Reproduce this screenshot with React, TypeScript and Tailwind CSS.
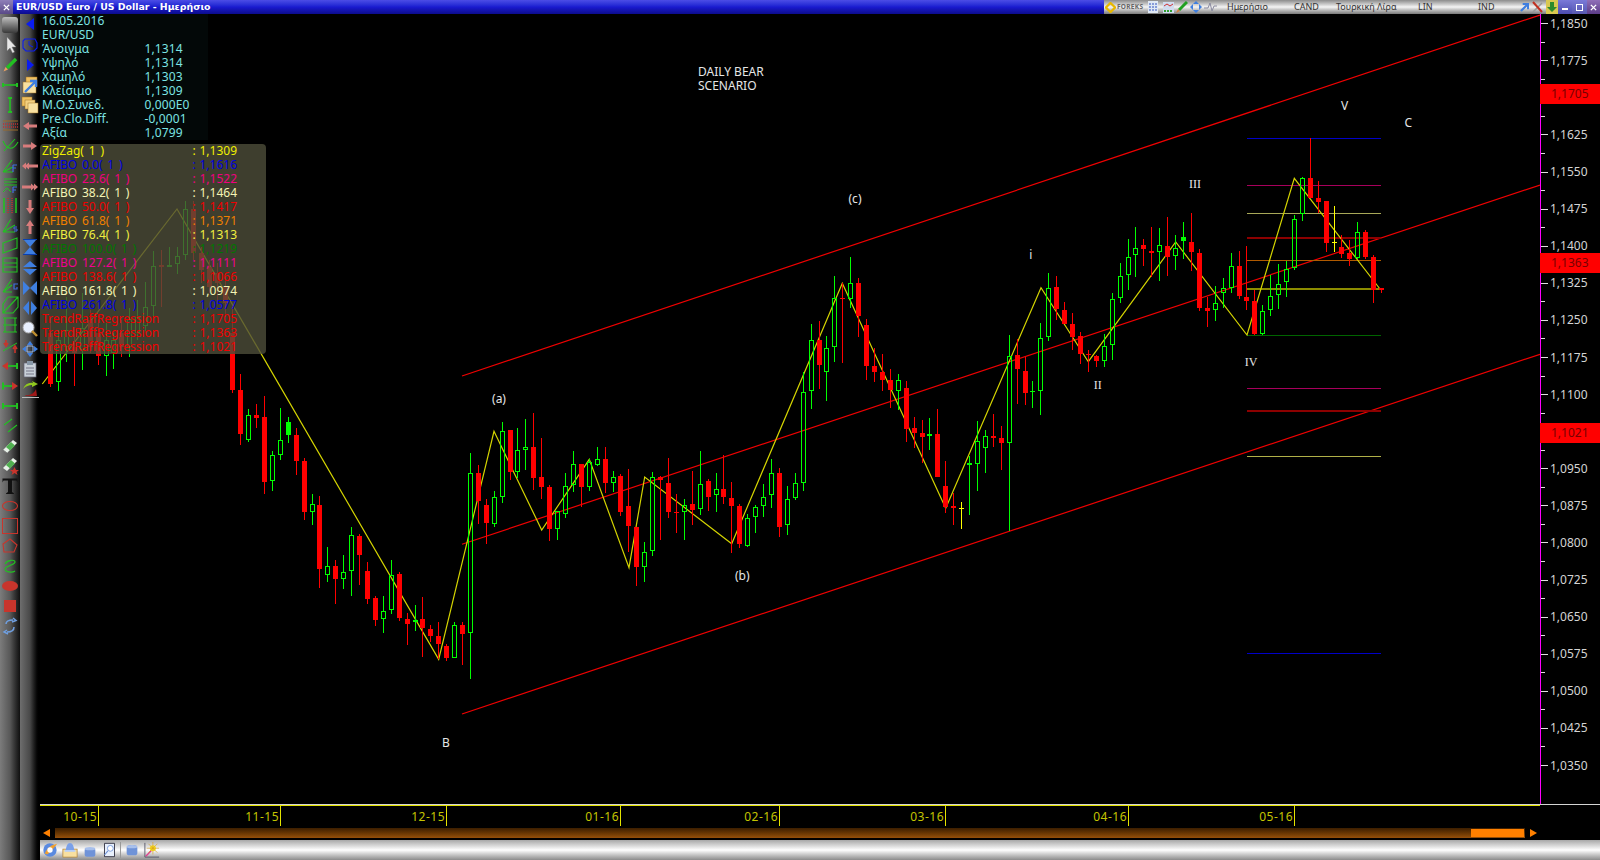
import React from "react";

type Row = [number, number, number, number, number, string];
const mk = (ox: number, oy: number, rows: Row[]) =>
  rows.map(([zx, hi, lo, top, bot, t]) => ({
    x: Math.floor(ox + zx / 3),
    hi: Math.round(oy + hi / 3),
    lo: Math.round(oy + lo / 3),
    top: Math.round(oy + top / 3),
    bot: Math.round(oy + bot / 3),
    t,
  }));

const candles = [
  ...mk(0, 0, [
    [151, 950, 1160, 1000, 1152, "r"], [175, 990, 1172, 1020, 1145, "g"], [199, 890, 1085, 990, 1040, "g"],
    [223, 980, 1157, 1040, 1060, "r"], [247, 880, 1110, 985, 1050, "g"], [271, 930, 1060, 960, 1040, "r"],
    [295, 960, 1095, 1000, 1067, "r"], [319, 970, 1127, 1020, 1067, "g"], [340, 1000, 1107, 1020, 1060, "g"],
    [365, 960, 1072, 1000, 1040, "r"], [389, 925, 1072, 958, 1040, "g"], [412, 900, 1020, 950, 1000, "g"],
    [436, 845, 1000, 920, 977, "g"], [460, 752, 950, 798, 917, "g"], [484, 750, 920, 794, 800, "r"],
    [508, 740, 800, 794, 798, "g"], [532, 740, 822, 768, 793, "g"], [556, 603, 780, 628, 766, "g"],
    [580, 603, 780, 628, 760, "r"], [604, 740, 850, 760, 810, "r"], [628, 780, 880, 800, 860, "r"],
    [652, 790, 900, 820, 850, "r"], [676, 830, 950, 860, 910, "r"], [697, 920, 1180, 1000, 1170, "r"],
  ]),
  ...mk(30, 340, [
    [631, 102, 315, 150, 281, "r"], [655, 207, 305, 226, 299, "g"], [679, 192, 263, 226, 233, "r"],
    [703, 168, 461, 232, 425, "r"], [727, 334, 452, 346, 422, "g"], [751, 205, 360, 301, 344, "g"],
    [775, 232, 308, 247, 284, "G"], [799, 265, 404, 286, 362, "r"], [823, 355, 539, 364, 515, "r"],
    [847, 462, 555, 493, 515, "g"], [868, 468, 743, 496, 687, "r"], [892, 622, 725, 679, 706, "g"],
    [916, 660, 791, 679, 716, "r"], [940, 646, 746, 697, 718, "g"], [964, 562, 767, 586, 692, "g"],
    [988, 583, 734, 589, 644, "r"], [1012, 667, 791, 694, 777, "r"], [1036, 769, 857, 775, 839, "r"],
    [1060, 769, 878, 814, 838, "g"], [1084, 661, 821, 706, 811, "g"], [1108, 697, 842, 703, 833, "r"],
    [1132, 820, 915, 838, 851, "r"], [1156, 796, 872, 841, 847, "g"], [1177, 771, 950, 838, 863, "r"],
    [1201, 856, 905, 868, 887, "r"], [1225, 847, 958, 889, 911, "r"], [1249, 913, 964, 919, 953, "r"],
    [1273, 847, 955, 856, 953, "g"], [1297, 847, 974, 856, 881, "r"],
  ]),
  ...mk(450, 390, [
    [61, 190, 866, 250, 729, "g"], [85, 226, 401, 250, 333, "r"], [109, 327, 461, 346, 399, "r"],
    [133, 304, 410, 322, 401, "g"], [157, 97, 338, 124, 320, "g"], [181, 120, 270, 120, 245, "r"],
    [203, 114, 265, 181, 245, "g"], [226, 87, 240, 172, 181, "g"], [250, 69, 300, 171, 264, "r"],
    [274, 145, 326, 262, 291, "r"], [298, 286, 452, 292, 416, "r"], [322, 362, 449, 362, 416, "g"],
    [346, 250, 383, 289, 371, "g"], [370, 184, 305, 223, 284, "g"], [394, 222, 350, 223, 291, "r"],
    [418, 208, 302, 217, 290, "g"], [442, 171, 228, 208, 224, "g"], [466, 172, 308, 208, 279, "r"],
    [490, 243, 305, 262, 278, "g"], [512, 252, 378, 258, 365, "r"], [536, 237, 486, 349, 407, "r"],
    [560, 411, 587, 411, 531, "r"], [584, 457, 575, 487, 532, "g"], [608, 245, 497, 260, 484, "g"],
    [632, 259, 449, 262, 270, "r"], [656, 205, 383, 280, 365, "r"], [680, 312, 429, 367, 370, "r"],
    [703, 328, 449, 344, 367, "g"], [727, 243, 405, 342, 359, "r"], [751, 184, 374, 283, 358, "g"],
    [775, 268, 364, 274, 321, "r"], [799, 250, 365, 298, 316, "g"], [820, 195, 342, 297, 320, "r"],
    [844, 277, 488, 324, 347, "r"], [868, 342, 473, 348, 461, "r"], [892, 373, 470, 385, 467, "g"],
    [916, 346, 429, 352, 382, "g"], [940, 283, 381, 322, 349, "g"], [964, 207, 354, 250, 316, "g"],
    [988, 234, 440, 250, 410, "r"], [1012, 288, 435, 328, 406, "g"], [1036, 250, 330, 280, 323, "g"],
  ]),
  ...mk(780, 230, [
    [70, 425, 782, 487, 758, "g"], [94, 282, 536, 331, 482, "g"], [118, 274, 477, 330, 405, "r"],
    [139, 319, 513, 355, 425, "g"], [163, 139, 396, 205, 352, "g"], [187, 160, 399, 203, 207, "r"],
    [211, 82, 234, 160, 206, "g"], [235, 145, 321, 160, 257, "r"], [259, 267, 449, 286, 407, "r"],
    [283, 355, 456, 408, 426, "r"], [307, 373, 483, 426, 450, "r"], [331, 418, 533, 450, 480, "r"],
    [355, 433, 540, 449, 482, "g"], [379, 454, 636, 475, 597, "r"], [403, 561, 655, 595, 609, "r"],
    [427, 571, 700, 610, 621, "r"], [448, 564, 660, 613, 617, "G"], [472, 538, 742, 613, 741, "r"],
    [496, 694, 848, 769, 830, "r"], [520, 790, 885, 829, 833, "r"], [544, 817, 896, 833, 836, "y"],
    [568, 677, 855, 700, 704, "G"], [592, 574, 783, 634, 701, "g"], [616, 601, 729, 619, 653, "g"],
    [640, 553, 652, 619, 623, "r"], [664, 588, 720, 625, 640, "r"], [688, 316, 902, 377, 640, "g"],
    [712, 328, 522, 376, 417, "r"], [736, 381, 525, 423, 489, "r"], [757, 454, 534, 483, 485, "G"],
    [781, 280, 555, 325, 482, "g"], [805, 130, 333, 173, 320, "g"], [829, 138, 270, 172, 237, "r"],
    [853, 217, 282, 240, 282, "r"], [877, 250, 360, 283, 321, "r"], [901, 306, 402, 319, 372, "r"],
    [925, 361, 425, 372, 375, "r"], [949, 375, 411, 377, 392, "r"], [973, 312, 411, 349, 394, "g"],
    [997, 190, 390, 208, 346, "g"], [1021, 100, 219, 139, 205, "g"], [1045, 27, 180, 80, 136, "g"],
    [1066, -10, 140, 55, 74, "g"], [1090, 27, 108, 45, 57, "r"], [1114, -8, 140, 64, 68, "r"],
    [1138, -5, 153, 46, 67, "g"], [1162, -38, 137, 48, 80, "r"], [1186, 15, 120, 55, 79, "g"],
    [1210, -24, 88, 22, 33, "G"], [1234, -50, 124, 36, 65, "r"], [1258, 57, 243, 69, 234, "r"],
    [1282, 200, 290, 235, 243, "r"],
  ]),
  ...mk(1180, 120, [
    [82, 530, 620, 565, 572, "r"], [106, 498, 602, 548, 571, "g"], [130, 475, 563, 505, 520, "g"],
    [154, 399, 518, 439, 505, "g"], [178, 393, 537, 438, 527, "r"], [199, 378, 570, 531, 542, "r"],
    [223, 510, 645, 543, 641, "r"], [247, 555, 645, 574, 643, "g"], [271, 465, 587, 529, 571, "g"],
    [295, 432, 567, 493, 526, "g"], [319, 424, 530, 448, 487, "g"], [343, 285, 449, 298, 445, "g"],
    [367, 171, 303, 175, 283, "g"], [391, 55, 233, 175, 233, "r"], [415, 183, 278, 235, 245, "r"],
    [439, 243, 395, 244, 369, "r"], [463, 259, 395, 367, 370, "y"], [484, 345, 414, 382, 401, "r"],
    [508, 360, 437, 400, 417, "r"], [532, 306, 417, 337, 415, "g"], [556, 330, 417, 336, 411, "r"],
    [580, 406, 548, 412, 509, "r"], [604, 505, 519, 505, 509, "r"],
  ]),
];

const zigzag =
  "42.3,384 177,209 438.7,659.3 494,431.3 541.7,530 589.3,459.3 629,567.7 644.7,477 731.7,543.7 842.3,283.3 945.7,508.3 1041,287.7 1088.3,361.7 1175.7,242 1247,335 1294.3,178.3 1380,289";

const fibs: [number, string, number][] = [
  [138, "#0000c8", 1], [185, "#a8005c", 1], [213, "#a8a858", 1], [237, "#8c0000", 2], [260, "#b05a00", 1],
  [288, "#8c8c00", 2], [335, "#006400", 1], [388, "#a8005c", 1], [410, "#8c0000", 2], [456, "#b0b048", 1], [653, "#0000c8", 1],
];

const labels: [string, number, number, string, number][] = [
  ["DAILY BEAR", 698, 75.5, "start", 0],
  ["SCENARIO", 698, 89.5, "start", 0],
  ["(a)", 499, 403, "middle", 0],
  ["(b)", 742.3, 579.5, "middle", 0],
  ["(c)", 855, 203, "middle", 0],
  ["B", 446, 747, "middle", 0],
  ["i", 1030.7, 259, "middle", 0],
  ["II", 1097.7, 389, "middle", 1],
  ["III", 1195, 188, "middle", 1],
  ["IV", 1251, 366, "middle", 1],
  ["V", 1344.7, 110, "middle", 0],
  ["C", 1408.3, 127, "middle", 0],
];

const Chart = () => (
  <svg viewBox="40 14 1500 790" className="absolute inset-0 w-[1500px] h-[790px]">
    <g stroke="#f00000" strokeWidth="1.2" fill="none">
      <line x1="462" y1="376" x2="1540" y2="15" />
      <line x1="462" y1="544.3" x2="1540" y2="185" />
      <line x1="462" y1="714" x2="1540" y2="354.3" />
    </g>
    <g shapeRendering="crispEdges">
      {fibs.map(([y, c, h], i) => (
        <rect key={i} x="1247" y={y} width="134" height={h} fill={c} />
      ))}
    </g>
    <polyline points={zigzag} fill="none" stroke="#d4d400" strokeWidth="1.2" />
    <g shapeRendering="crispEdges">
      {candles.map((c, i) => {
        const col = c.t === "r" ? "#ff0000" : c.t === "y" ? "#ffff00" : "#00ff00";
        const h = Math.max(c.bot - c.top, 1);
        return (
          <g key={i}>
            <rect x={c.x} y={c.hi} width="1" height={Math.max(c.top - c.hi, 0)} fill={col} />
            <rect x={c.x} y={c.top + h} width="1" height={Math.max(c.lo - c.top - h, 0)} fill={col} />
            {c.t === "g" ? (
              <rect x={c.x - 1.5} y={c.top + 0.5} width="4" height={Math.max(h - 1, 1)} fill="none" stroke={col} strokeWidth="1" />
            ) : (
              <rect x={c.x - 2} y={c.top} width="5" height={h} fill={col} />
            )}
          </g>
        );
      })}
    </g>
    {labels.map(([t, x, y, a, serif], i) => (
      <text
        key={i}
        x={x}
        y={y}
        textAnchor={a as "start" | "middle"}
        fill="#e6e6e6"
        fontSize="12"
        fontFamily={serif ? "'Liberation Serif', serif" : "'Noto Sans', sans-serif"}
      >
        {t}
      </text>
    ))}
  </svg>
);

const S = ({ children }: { children: React.ReactNode }) => (
  <svg viewBox="0 0 18 18" className="w-[18px] h-[18px]">
    {children}
  </svg>
);
const G = "#22c022";
const R = "#c8352c";
const B = "#3f6fe0";
const P = "#d87c7c";

const strip1: React.ReactNode[] = [
  <div className="w-[16px] h-[16px] rounded-[3px] bg-linear-to-b from-[#c0c0c0] to-[#3a3a3a]" />,
  <S><path d="M6 1V15L9 12L11.5 17L13.5 16L11 11H15Z" fill="#e8e8e8" stroke="#777" strokeWidth=".5" /></S>,
  <S><path d="M15 3L6 12" stroke={G} strokeWidth="3.4" /><path d="M4.5 11L7 13.5L2.5 15.5Z" fill="#e8a060" /></S>,
  <S><path d="M2 9H16" stroke={G} strokeWidth="1.6" /><path d="M2 7V11M16 7V11" stroke={G} strokeWidth="2" /></S>,
  <S><path d="M9 2V16" stroke={G} strokeWidth="1.6" /><path d="M7 2H11M7 16H11" stroke={G} strokeWidth="2" /></S>,
  <S><path d="M2 5H17M2 14H17" stroke="#9a6a2a" strokeWidth="1" /><path d="M2 8H17M2 11H17" stroke="#c03030" strokeWidth="1.4" strokeDasharray="1 1" /></S>,
  <S><path d="M2 5C6 14 12 15 17 6M3 15L14 3" stroke={G} strokeWidth="1.1" fill="none" /></S>,
  <S><path d="M2 16L11 4M2 16L12 11M2 16H12" stroke={G} strokeWidth="1.1" fill="none" /><path d="M12 9V16M12 9H16M12 12H15" stroke={B} strokeWidth="1.2" /></S>,
  <S><path d="M3 3H16M3 6H16M3 9H16M2 16L6 12L10 16" stroke={G} strokeWidth="1" fill="none" /><path d="M12 11V17M12 11H16M12 14H15" stroke={B} strokeWidth="1.2" /></S>,
  <S><path d="M3 2V17M15 2V17" stroke={G} strokeWidth="1.6" /><path d="M7 2V17M11 2V17" stroke="#c03030" strokeWidth="1.5" strokeDasharray="1 1" /></S>,
  <S><path d="M2 16L10 3M2 16L14 9M2 16H14" stroke={G} strokeWidth="1.1" fill="none" /><path d="M16 11H13V13H16V15H13" stroke={B} strokeWidth="1" fill="none" /></S>,
  <S><path d="M2 7L16 2V12L2 17ZM2 7V17M16 2V12" stroke={G} strokeWidth="1.1" fill="none" /></S>,
  <S><path d="M2 2H16V16H2ZM2 7H16M2 11H16" stroke={G} strokeWidth="1.1" fill="none" /></S>,
  <S><path d="M2 16L11 3M2 16L11 9M2 16H11" stroke={G} strokeWidth="1.1" fill="none" /><path d="M17 8H13V13H16V11" stroke={B} strokeWidth="1.2" fill="none" /></S>,
  <S><path d="M2 8L7 1H17V11L12 17H2ZM2 17L17 1" stroke={G} strokeWidth="1.1" fill="none" /></S>,
  <S><path d="M2 2H16M2 9H16M2 16H16M4 2V16M14 2V16" stroke={G} strokeWidth="1.1" fill="none" /></S>,
  <S><path d="M2 14L16 6" stroke={G} strokeWidth="1" /><path d="M5 3V7M3 6L5 9L7 6" stroke={R} strokeWidth="1.6" fill="none" /><path d="M14 16V11M12 12L14 9L16 12" stroke={R} strokeWidth="1.6" fill="none" /></S>,
  <S><path d="M6 9H17" stroke={G} strokeWidth="1.8" /><path d="M16 6V12" stroke={G} strokeWidth="2" /><path d="M1 9L7 5V13Z" fill={R} /></S>,
  <S><path d="M2 9H12" stroke={G} strokeWidth="1.8" /><path d="M2 5.5V12.5" stroke={G} strokeWidth="2" /><path d="M17 9L11 5V13Z" fill={R} /></S>,
  <S><path d="M2 9H16" stroke={G} strokeWidth="1.8" /><path d="M2 6V12M16 6V12" stroke={G} strokeWidth="2" /></S>,
  <S><path d="M3 8L11 2M7 15L16 8" stroke={G} strokeWidth="1.1" /></S>,
  <S><path d="M2 13L12 3L16 6L6 16Z" fill="#e8f0e8" /><path d="M5 10L10 5L14 8.5L9 13.5Z" fill="#50b050" /><path d="M2 13L6 16" stroke="#777" /></S>,
  <S><path d="M2 11L12 1L16 4L6 14Z" fill="#e8f0e8" /><path d="M5 8L10 3L14 6.5L9 11.5Z" fill="#50b050" /><path d="M13.5 10L15 13H18L15.5 15L16.5 18L13.5 16L10.5 18L11.5 15L9 13H12Z" fill={R} /></S>,
  <S><path d="M1.5 1.5H16.5V5.5L15.5 3.5H11V15L13 16.5V17H5V16.5L7 15V3.5H2.5L1.5 5.5Z" fill="#111" /></S>,
  <S><ellipse cx="9" cy="9" rx="7.5" ry="4.5" fill="none" stroke={R} strokeWidth="1.1" /></S>,
  <S><rect x="1.5" y="1.5" width="15" height="15" fill="none" stroke={R} strokeWidth="1" /></S>,
  <S><path d="M9 2L16 8L13 15H3L2 7Z" fill="none" stroke={R} strokeWidth="1.1" /></S>,
  <S><path d="M4 7C6 3 14 2 14 5C14 8 4 9 4 12C4 15 11 16 14 14" fill="none" stroke={G} strokeWidth="1.2" /></S>,
  <S><ellipse cx="9" cy="9" rx="8" ry="5" fill={R} /></S>,
  <S><rect x="3" y="3" width="12" height="12" fill={R} /></S>,
  <S><path d="M5 7C5 4 9 3 12 3M12 1L15 3.5L11 5M13 10C13 14 9 15 6 15M6 13L3 15L7 17" fill="none" stroke="#6f9fe0" strokeWidth="1.5" /></S>,
];

const strip2: React.ReactNode[] = [
  <S><path d="M13 3L5 9L13 15Z" fill="#0a1cf0" /></S>,
  <S><path d="M4 4H14L16 8V13L13 16H5L2 13V6Z" fill="none" stroke="#0a1cf0" strokeWidth="1.1" /><path d="M8 6V10L12 12" fill="none" stroke="#0a1cf0" /></S>,
  <S><path d="M6 3L13 9L6 15Z" fill="#0a1cf0" /></S>,
  <S><rect x="5" y="1" width="11" height="9" fill="#f0c060" stroke="#a07020" strokeWidth=".5" /><rect x="2" y="6" width="13" height="11" fill="#f8e0a0" stroke="#a07020" strokeWidth=".5" /><path d="M4 16L14 6M9 5H15V11" stroke="#3f7fe0" strokeWidth="2.4" fill="none" /></S>,
  <S><rect x="1" y="1" width="10" height="9" fill="#f0c060" stroke="#a07020" strokeWidth=".5" /><rect x="4" y="4" width="10" height="9" fill="#f4d080" stroke="#a07020" strokeWidth=".5" /><rect x="7" y="7" width="10" height="10" fill="#f8e0a0" stroke="#a07020" strokeWidth=".5" /></S>,
  <S><path d="M2 9L8 5V7.5H16V10.5H8V13Z" fill={P} /></S>,
  <S><path d="M16 9L10 5V7.5H2V10.5H10V13Z" fill={P} /></S>,
  <S><path d="M1 9L5 5.5V8L8 5.5V7.5H17V10.5H8V12.5L5 10V12.5Z" fill={P} /></S>,
  <S><path d="M17 9L13 5.5V8L10 5.5V7.5H1V10.5H10V12.5L13 10V12.5Z" fill={P} /></S>,
  <S><path d="M9 16L5 10H7.5V2H10.5V10H13Z" fill={P} /></S>,
  <S><path d="M9 2L5 8H7.5V16H10.5V8H13Z" fill={P} /></S>,
  <S><path d="M3 2H15L9 9ZM9 9L15 16H3Z" fill="#3f7fe0" /><path d="M2 1.5H16M2 16.5H16" stroke="#0a3fb0" /></S>,
  <S><path d="M9 2L16 8H2ZM2 10H16L9 16Z" fill="#3f7fe0" /></S>,
  <S><path d="M2 2V16L9 9ZM16 2V16L9 9Z" fill="#3f7fe0" /></S>,
  <S><path d="M8 2V16L2 9ZM10 2V16L16 9Z" fill="#3f7fe0" /></S>,
  <S><circle cx="7.5" cy="7.5" r="5.5" fill="#e8f0ff" stroke="#aaa" /><path d="M11 11L16 16" stroke="#c09030" strokeWidth="2.4" /></S>,
  <S><path d="M9 1L12 5H6ZM9 17L12 13H6ZM1 9L5 6V12ZM17 9L13 6V12Z" fill="#3f7fe0" /><path d="M6 6L12 6L12 12L6 12Z" fill="none" stroke="#9fbff0" /></S>,
  <S><rect x="3" y="3" width="12" height="14" fill="#c8d0d8" stroke="#667" strokeWidth=".7" /><rect x="6" y="1" width="6" height="4" fill="#8898a8" /><path d="M5 8H13M5 11H13M5 14H13" stroke="#778" /></S>,
  <S><path d="M2 9C4 4 8 2 12 3L11 1L17 4L11 7V5C8 5 5 6 2 9Z" fill="#90c820" /><path d="M4 15C8 16 13 14 15 9L16 16H5Z" fill="#a01818" /><path d="M1 17.5H18" stroke="#bbb" /></S>,
];

const B2 = ({ children, cls }: { children: React.ReactNode; cls: string }) => (
  <svg viewBox="0 0 18 18" className={cls}>{children}</svg>
);

const info: [string, string][] = [
  ["16.05.2016", ""],
  ["EUR/USD", ""],
  ["Άνοιγμα", "1,1314"],
  ["Υψηλό", "1,1314"],
  ["Χαμηλό", "1,1303"],
  ["Κλείσιμο", "1,1309"],
  ["Μ.Ο.Συνεδ.", "0,000E0"],
  ["Pre.Clo.Diff.", "-0,0001"],
  ["Αξία", "1,0799"],
];

const panel = [
  { n: "ZigZag( 1 )", v: "1,1309", c: "text-[#f0f000]" },
  { n: "AFIBO 0.0( 1 )", v: "1,1616", c: "text-[#0000e0]" },
  { n: "AFIBO 23.6( 1 )", v: "1,1522", c: "text-[#f00080]" },
  { n: "AFIBO 38.2( 1 )", v: "1,1464", c: "text-[#f4f4b4]" },
  { n: "AFIBO 50.0( 1 )", v: "1,1417", c: "text-[#f00000]" },
  { n: "AFIBO 61.8( 1 )", v: "1,1371", c: "text-[#f08000]" },
  { n: "AFIBO 76.4( 1 )", v: "1,1313", c: "text-[#f0f040]" },
  { n: "AFIBO 100.0( 1 )", v: "1,1219", c: "text-[#007800]" },
  { n: "AFIBO 127.2( 1 )", v: "1,1111", c: "text-[#f00090]" },
  { n: "AFIBO 138.6( 1 )", v: "1,1066", c: "text-[#f00000]" },
  { n: "AFIBO 161.8( 1 )", v: "1,0974", c: "text-[#f4f4b4]" },
  { n: "AFIBO 261.8( 1 )", v: "1,0577", c: "text-[#0000e0]" },
  { n: "TrendRaffRegression", v: "1,1705", c: "text-[#f00000]" },
  { n: "TrendRaffRegression", v: "1,1363", c: "text-[#f00000]" },
  { n: "TrendRaffRegression", v: "1,1021", c: "text-[#f00000]" },
];

const ticks = [
  "1,1850", "1,1775", "1,1700", "1,1625", "1,1550", "1,1475", "1,1400", "1,1325", "1,1250", "1,1175", "1,1100",
  "1,1025", "1,0950", "1,0875", "1,0800", "1,0725", "1,0650", "1,0575", "1,0500", "1,0425", "1,0350",
];

const months: [string, string][] = [
  ["10-15", "w-[59px]"], ["11-15", "w-[182px]"], ["12-15", "w-[166px]"], ["01-16", "w-[174px]"],
  ["02-16", "w-[159px]"], ["03-16", "w-[166px]"], ["04-16", "w-[183px]"], ["05-16", "w-[166px]"],
];

const tags: [string, string][] = [
  ["1,1705", "top-[70px]"],
  ["1,1363", "top-[239px]"],
  ["1,1021", "top-[409px]"],
];

export default function App() {
  return (
    <div className="w-[1600px] h-[860px] bg-black overflow-hidden flex flex-col font-['Noto_Sans',sans-serif] text-[12px] leading-[14px]">
      <div className="h-[14px] flex items-stretch shrink-0 bg-linear-to-b from-[#4c4ce6] via-[#1a1ad0] to-[#0c0c8c]">
        <div className="w-[13px] shrink-0 bg-linear-to-b from-[#8f80b8] to-[#5a4a88] flex items-center justify-center">
          <svg viewBox="0 0 8 8" className="w-[7px] h-[7px]"><path d="M1 1L7 7M7 1L1 7" stroke="#fff" strokeWidth="1.6" /></svg>
        </div>
        <div className="ml-[3px] w-[1088px] shrink-0 text-white font-bold text-[9.4px] leading-[14px] font-['DejaVu_Sans',sans-serif] whitespace-nowrap">
          EUR/USD Euro / US Dollar - Ημερήσιο
        </div>
        <div className="w-[442px] shrink-0 flex items-center bg-linear-to-b from-[#8c8c8c] via-[#f4f4f4] to-[#7a7a7a] text-[#333] text-[9px] leading-[14px]">
          <svg viewBox="0 0 12 12" className="ml-[1px] w-[11px] h-[11px]"><path d="M6 1L11 6L6 11L1 6Z" fill="none" stroke="#e8b800" strokeWidth="2.4" /></svg>
          <span className="ml-[1px] w-[30px] text-[6.5px] font-bold text-[#666] tracking-[0.3px]">FOREKS</span>
          <svg viewBox="0 0 10 12" className="ml-[1px] w-[10px] h-[12px]"><rect width="10" height="12" fill="#dfe8f4" /><path d="M1 3H9M1 6H9M1 9H9" stroke="#3050c0" strokeDasharray="2 1" /></svg>
          <svg viewBox="0 0 11 11" className="ml-[5px] w-[11px] h-[11px]"><rect width="11" height="11" fill="#d0dcf0" /><path d="M1 4L4 2L7 4L10 2" stroke="#d03030" fill="none" /><path d="M1 9H10" stroke="#30a030" strokeWidth="2" strokeDasharray="2 1" /></svg>
          <svg viewBox="0 0 12 12" className="ml-[2px] w-[12px] h-[12px]"><path d="M11 1L3 9" stroke="#20a020" strokeWidth="3" /><path d="M2 8L4 10L0 12Z" fill="#d08040" /></svg>
          <svg viewBox="0 0 12 12" className="ml-[2px] w-[12px] h-[12px]"><path d="M6 0L9 3H3ZM6 12L9 9H3ZM0 6L3 3V9ZM12 6L9 3V9Z" fill="#3f7fe0" /></svg>
          <svg viewBox="0 0 13 10" className="ml-[2px] w-[13px] h-[10px]"><path d="M0 6H4L6 1L8 9L10 4H13" stroke="#8a8aa0" fill="none" /></svg>
          <span className="ml-[10px] w-[67px] shrink-0">Ημερήσιο</span>
          <span className="w-[42px] shrink-0">CAND</span>
          <span className="w-[82px] shrink-0">Τουρκική Λίρα</span>
          <span className="w-[60px] shrink-0">LIN</span>
          <span className="w-[42px] shrink-0">IND</span>
          <svg viewBox="0 0 10 10" className="w-[9px] h-[9px] shrink-0"><path d="M1 9L8 2M3 1H9V7" stroke="#3f7fe0" strokeWidth="2.4" fill="none" /></svg>
          <svg viewBox="0 0 11 12" className="ml-[3px] w-[11px] h-[12px] shrink-0"><path d="M1 11L10 2" stroke="#999" strokeWidth="1.6" /><path d="M1 1L10 11" stroke="#c03020" strokeWidth="2" /></svg>
        </div>
        <div className="w-[12px] shrink-0 bg-[#d8c850] flex items-center justify-center">
          <svg viewBox="0 0 10 12" className="w-[10px] h-[12px]"><path d="M3 1H7V6H10L5 11L0 6H3Z" fill="#2c8a2c" /></svg>
        </div>
        <div className="w-[14px] shrink-0 bg-linear-to-b from-[#7a7ad8] to-[#4c4cb0] flex items-center justify-center pt-[4px]">
          <div className="w-[6px] h-[2px] bg-white" />
        </div>
        <div className="w-[15px] shrink-0 bg-linear-to-b from-[#7a7ad8] to-[#5858b0] flex items-center justify-center">
          <div className="w-[7px] h-[7px] border border-white" />
        </div>
        <div className="w-[13px] shrink-0 bg-linear-to-b from-[#9070b8] to-[#5c3c88] flex items-center justify-center">
          <svg viewBox="0 0 8 8" className="w-[7px] h-[7px]"><path d="M1 1L7 7M7 1L1 7" stroke="#fff" strokeWidth="1.6" /></svg>
        </div>
      </div>

      <div className="flex flex-1 min-h-0">
        <div className="w-[20px] shrink-0 flex flex-col items-center pt-[0.5px] bg-linear-to-r from-[#7c7c7c] via-[#585858] to-[#101010]">
          {strip1.map((ic, i) => (
            <div key={i} className="h-[20.07px] shrink-0 flex items-center justify-center">{ic}</div>
          ))}
        </div>
        <div className="w-[20px] shrink-0 flex flex-col items-center bg-linear-to-r from-[#6e6e6e] via-[#484848] to-[#000]">
          {strip2.map((ic, i) => (
            <div key={i} className="h-[20.3px] shrink-0 flex items-center justify-center">{ic}</div>
          ))}
        </div>

        <div className="flex-1 flex flex-col min-w-0">
          <div className="h-[790px] flex shrink-0">
            <div className="relative w-[1500px] shrink-0 overflow-hidden">
              <Chart />
              <div className="absolute left-0 top-0 w-[168px] h-[126px] bg-[#030808] pl-[2px] text-[#7ce4e4]">
                {info.map(([l, v]) => (
                  <div key={l} className="h-[14px] flex whitespace-nowrap">
                    <span className="w-[102.5px] shrink-0 tracking-[0.1px]">{l}</span>
                    <span className="tracking-[0.1px]">{v}</span>
                  </div>
                ))}
              </div>
              <div className="absolute left-0 top-[130px] w-[226px] h-[210px] rounded-[4px] bg-[rgba(78,78,58,0.8)] pl-[2px]">
                {panel.map((p, i) => (
                  <div key={i} className={`h-[14px] flex whitespace-nowrap ${p.c}`}>
                    <span className="w-[150.5px] shrink-0 [word-spacing:1.7px]">{p.n}</span>
                    <span className="w-[7px] shrink-0">:</span>
                    <span>{p.v}</span>
                  </div>
                ))}
              </div>
            </div>
            <div className="relative w-[60px] border-l border-[#ff00ff] text-[#d4d4d4]">
              <div className="mt-[0.4px] flex flex-col">
                {ticks.map((t) => (
                  <React.Fragment key={t}>
                    <div className="h-[18.55px] flex items-center">
                      <div className="w-[7px] h-px bg-[#e0e0e0]" />
                      <span className="ml-[2px]">{t}</span>
                    </div>
                    {t !== "1,0350" && (
                      <div className="h-[18.55px] flex items-center">
                        <div className="w-[4px] h-px bg-[#e0e0e0]" />
                      </div>
                    )}
                  </React.Fragment>
                ))}
              </div>
              {tags.map(([t, c]) => (
                <div key={t} className={`absolute left-[-1px] w-[60px] h-[20px] bg-[#ff0000] text-[#780000] pl-[11px] leading-[20px] ${c}`}>
                  {t}
                </div>
              ))}
            </div>
          </div>

          <div className="h-px shrink-0 bg-[#d4d4d4]" />
          <div className="h-px w-[1500px] shrink-0 bg-[#e4e400]" />
          <div className="h-[20px] shrink-0 flex text-[#c4c400] tracking-[0.5px]">
            {months.map(([m, w]) => (
              <div key={m} className={`${w} shrink-0 border-r border-[#e4e400] pr-px pt-[2px] flex items-center justify-end`}>
                {m}
              </div>
            ))}
          </div>
          <div className="mt-[2px] h-[10px] shrink-0 flex items-center">
            <div className="ml-[3px] w-0 h-0 border-y-[4px] border-y-transparent border-r-[7px] border-r-[#ff8000]" />
            <div className="ml-[5px] w-[1470px] h-[10px] flex justify-end bg-linear-to-b from-[#3c1e00] to-[#96500a]">
              <div className="w-[53px] h-[8px] mt-px mr-px bg-[#ff8000]" />
            </div>
            <div className="ml-[5px] w-0 h-0 border-y-[4px] border-y-transparent border-l-[7px] border-l-[#ff8000]" />
          </div>
          <div className="mt-[2px] h-[20px] shrink-0 flex items-center bg-linear-to-b from-[#a8a8a8] via-[#ffffff] to-[#8c8c8c]">
            <B2 cls="ml-[2px] w-[16px] h-[16px]"><circle cx="9" cy="9" r="7.5" fill="#5a8ae0" /><path d="M3 13C7 5 12 3 17 2C14 6 11 10 6 14Z" fill="#f0a030" /><circle cx="9" cy="9" r="3" fill="#fff" /></B2>
            <B2 cls="ml-[4px] w-[16px] h-[16px]"><rect x="1" y="8" width="16" height="9" fill="#f8e0a0" stroke="#b08030" strokeWidth=".8" /><path d="M4 10C5 4 6 1 9 1C12 1 13 4 14 10Z" fill="#7aa0e8" /><rect x="3" y="9" width="12" height="2" fill="#b8d0f8" /></B2>
            <B2 cls="ml-[6px] w-[12px] h-[12px] mt-[4px]"><rect x="1" y="3" width="16" height="13" rx="3" fill="#6f93d8" /><ellipse cx="9" cy="4" rx="8" ry="2.5" fill="#a8c0ec" /></B2>
            <B2 cls="ml-[6px] w-[15px] h-[16px]"><path d="M3 1H15V17H3Z" fill="#e8f0fc" stroke="#223" strokeWidth="1" /><circle cx="10" cy="7" r="3.5" fill="#fff" stroke="#6f93d8" /><path d="M7 10L3 15" stroke="#6f93d8" strokeWidth="1.4" /></B2>
            <div className="ml-[3px] w-px h-[16px] bg-[#999]" />
            <B2 cls="ml-[5px] w-[12px] h-[16px]"><rect x="1" y="2" width="16" height="15" rx="4" fill="#6f93d8" /><ellipse cx="9" cy="4" rx="8" ry="2.5" fill="#a8c0ec" /></B2>
            <B2 cls="ml-[6px] w-[16px] h-[16px]"><path d="M1 1V17H17" stroke="#556" fill="none" /><path d="M2 16L10 8" stroke="#e04090" strokeWidth="1.6" /><circle cx="10" cy="7" r="3.4" fill="#f8e020" /><path d="M10 0V14M3 7H17M5 2L15 12M15 2L5 12" stroke="#d8a020" strokeWidth=".7" /></B2>
          </div>
        </div>
      </div>
    </div>
  );
}
